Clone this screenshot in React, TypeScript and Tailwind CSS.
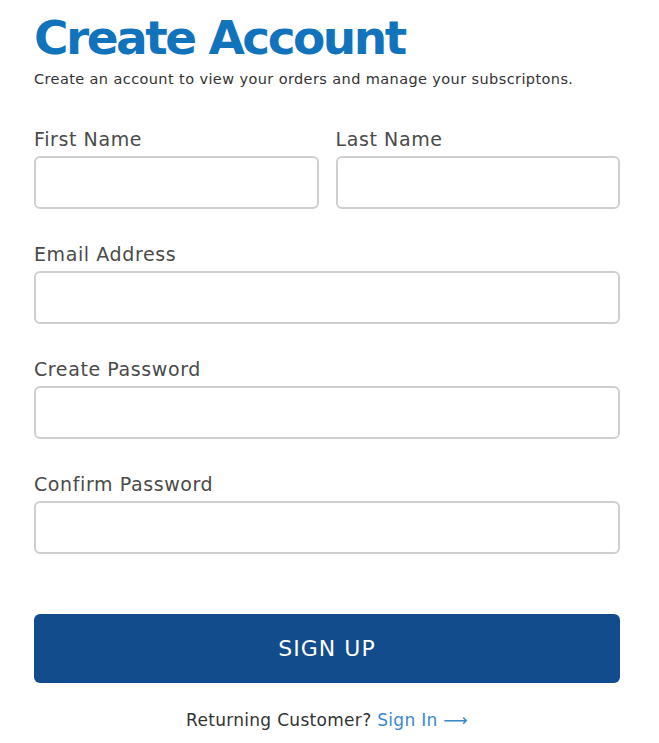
import React from 'react';

const font = { fontFamily: '"DejaVu Sans", "Open Sans", sans-serif' };

function Field({ label, type = 'text' }: { label: string; type?: string }) {
  return (
    <label className="flex flex-col">
      <span className="mb-[4px] text-[19px] leading-[26px] tracking-[0.6px] text-[#4a4a4a]">{label}</span>
      <input
        type={type}
        className="h-[53px] w-full rounded-[6px] border-2 border-[#cfcfcf] bg-white px-3 outline-none"
      />
    </label>
  );
}

export default function App() {
  return (
    <main className="min-h-[743px] bg-white pl-[34px] pr-[39px] pt-[10px]" style={font}>
      <h1 className="text-[47px] font-bold leading-[56px] tracking-[-2.5px] text-[#1173bc]">Create Account</h1>
      <p className="mt-[3px] text-[14.5px] leading-[20px] tracking-[0.4px] text-[#333]">
        Create an account to view your orders and manage your subscriptons.
      </p>

      <form className="mt-[37px] flex flex-col gap-[32px]">
        <div className="grid grid-cols-2 gap-[17px]">
          <Field label="First Name" />
          <Field label="Last Name" />
        </div>
        <Field label="Email Address" type="email" />
        <Field label="Create Password" type="password" />
        <Field label="Confirm Password" type="password" />
        <button
          type="button"
          className="mt-[28px] h-[69px] w-full rounded-[6px] bg-[#134c8c] text-[22px] tracking-[1px] text-white"
        >
          SIGN UP
        </button>
      </form>

      <p className="mt-[25px] text-center text-[17px] leading-[24px] tracking-[0.3px] text-[#333]">
        Returning Customer? <a className="text-[#3b88ca]">Sign In ⟶</a>
      </p>
    </main>
  );
}
